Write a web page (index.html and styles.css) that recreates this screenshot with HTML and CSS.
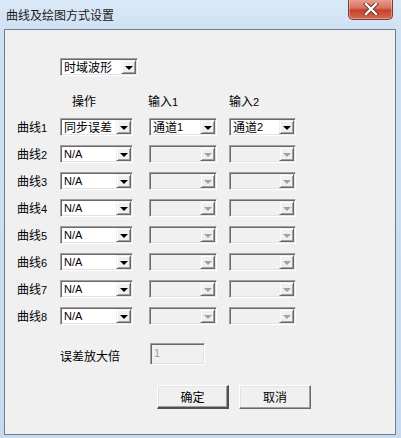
FILE: index.html
```html
<!DOCTYPE html>
<html>
<head>
<meta charset="utf-8">
<link rel="stylesheet" href="styles.css">
</head>
<body>
<div class="window">
  <div class="titlebar">
    <span class="title">曲线及绘图方式设置</span>
    <span class="close"><svg width="18" height="12" viewBox="0 0 18 12"><path d="M4 1 L14 11 M14 1 L4 11" stroke="#5a2a22" stroke-width="4" stroke-linecap="square"/><path d="M4 1 L14 11 M14 1 L4 11" stroke="#fff" stroke-width="2.4" stroke-linecap="square"/></svg></span>
  </div>
  <div class="client">
    <div class="combo wave"><span class="val">时域波形</span><span class="btn"><i class="arrow"></i></span></div>

    <div class="grid">
      <span></span><span class="hdr h1">操作</span><span class="hdr h2">输入<b class="num">1</b></span><span class="hdr h3">输入<b class="num">2</b></span>

      <span class="lbl">曲线<b class="num">1</b></span>
      <div class="combo"><span class="val">同步误差</span><span class="btn"><i class="arrow"></i></span></div>
      <div class="combo"><span class="val">通道<b class="num">1</b></span><span class="btn"><i class="arrow"></i></span></div>
      <div class="combo"><span class="val">通道<b class="num">2</b></span><span class="btn"><i class="arrow"></i></span></div>

      <span class="lbl">曲线<b class="num">2</b></span>
      <div class="combo"><span class="val na">N/A</span><span class="btn"><i class="arrow"></i></span></div>
      <div class="combo off"><span class="val"></span><span class="btn"><i class="arrow"></i></span></div>
      <div class="combo off"><span class="val"></span><span class="btn"><i class="arrow"></i></span></div>

      <span class="lbl">曲线<b class="num">3</b></span>
      <div class="combo"><span class="val na">N/A</span><span class="btn"><i class="arrow"></i></span></div>
      <div class="combo off"><span class="val"></span><span class="btn"><i class="arrow"></i></span></div>
      <div class="combo off"><span class="val"></span><span class="btn"><i class="arrow"></i></span></div>

      <span class="lbl">曲线<b class="num">4</b></span>
      <div class="combo"><span class="val na">N/A</span><span class="btn"><i class="arrow"></i></span></div>
      <div class="combo off"><span class="val"></span><span class="btn"><i class="arrow"></i></span></div>
      <div class="combo off"><span class="val"></span><span class="btn"><i class="arrow"></i></span></div>

      <span class="lbl">曲线<b class="num">5</b></span>
      <div class="combo"><span class="val na">N/A</span><span class="btn"><i class="arrow"></i></span></div>
      <div class="combo off"><span class="val"></span><span class="btn"><i class="arrow"></i></span></div>
      <div class="combo off"><span class="val"></span><span class="btn"><i class="arrow"></i></span></div>

      <span class="lbl">曲线<b class="num">6</b></span>
      <div class="combo"><span class="val na">N/A</span><span class="btn"><i class="arrow"></i></span></div>
      <div class="combo off"><span class="val"></span><span class="btn"><i class="arrow"></i></span></div>
      <div class="combo off"><span class="val"></span><span class="btn"><i class="arrow"></i></span></div>

      <span class="lbl">曲线<b class="num">7</b></span>
      <div class="combo"><span class="val na">N/A</span><span class="btn"><i class="arrow"></i></span></div>
      <div class="combo off"><span class="val"></span><span class="btn"><i class="arrow"></i></span></div>
      <div class="combo off"><span class="val"></span><span class="btn"><i class="arrow"></i></span></div>

      <span class="lbl">曲线<b class="num">8</b></span>
      <div class="combo"><span class="val na">N/A</span><span class="btn"><i class="arrow"></i></span></div>
      <div class="combo off"><span class="val"></span><span class="btn"><i class="arrow"></i></span></div>
      <div class="combo off"><span class="val"></span><span class="btn"><i class="arrow"></i></span></div>
    </div>

    <div class="gainrow">
      <span class="gainlbl">误差放大倍</span>
      <div class="field">1</div>
    </div>

    <div class="buttons">
      <div class="button default">确定</div>
      <div class="button">取消</div>
    </div>
  </div>
</div>
</body>
</html>
```
FILE: styles.css
```css
* { box-sizing: border-box; }
html, body { margin: 0; padding: 0; }
body {
  width: 401px;
  height: 438px;
  overflow: hidden;
  font-family: "Noto Sans CJK SC", "Liberation Sans", sans-serif;
  font-size: 12px;
  color: #000;
}
.window {
  width: 401px;
  height: 438px;
  background: linear-gradient(to bottom, #dbe9f7 0px, #cfe1f4 30px, #c6dbf1 100%);
  padding: 0 5px 3px 4px;
  display: flex;
  flex-direction: column;
}
.titlebar {
  height: 29px;
  display: flex;
  align-items: flex-start;
  justify-content: space-between;
}
.title {
  margin-top: 8px;
  margin-left: 2px;
  font-size: 12px;
  line-height: 14px;
  color: #1a1a1a;
}
.close {
  width: 45px;
  height: 21px;
  margin-right: 3px;
  margin-top: -1px;
  border: 1px solid #7d3a30;
  border-top: none;
  border-radius: 0 0 5px 5px;
  background: linear-gradient(to bottom, #e9a394 0%, #d9705d 45%, #c4412b 55%, #d46a50 100%);
  box-shadow: inset 0 0 0 1px rgba(255,255,255,0.35);
  display: flex;
  align-items: center;
  justify-content: center;
}
.client {
  flex: 1;
  background: #f0f0f0;
  border: 1px solid #6e7b88;
  padding-top: 28px;
}
.num {
  font-family: "Liberation Sans", "DejaVu Sans", sans-serif;
  font-weight: normal;
  font-size: 11px;
}
.combo {
  height: 18px;
  display: flex;
  align-items: stretch;
  background: #fff;
  border-top: 1px solid #a0a0a0;
  border-left: 1px solid #a0a0a0;
  border-bottom: 1px solid #fff;
  border-right: 1px solid #fff;
  box-shadow: inset 1px 1px 0 #696969, inset -1px -1px 0 #e3e3e3;
  padding: 1px 1px 1px 2px;
}
.combo .val {
  flex: 1;
  display: flex;
  align-items: center;
  padding-left: 1px;
  white-space: nowrap;
  line-height: 14px;
}
.combo .val.na {
  font-family: "Liberation Sans", "DejaVu Sans", sans-serif;
  font-size: 11px;
}
.combo .btn {
  width: 15px;
  flex: none;
  background: #f0f0f0;
  border-top: 1px solid #f0f0f0;
  border-left: 1px solid #f0f0f0;
  border-right: 1px solid #696969;
  border-bottom: 1px solid #696969;
  box-shadow: inset 1px 1px 0 #fff, inset -1px -1px 0 #a0a0a0;
  display: flex;
  align-items: center;
  justify-content: center;
}
.arrow {
  width: 0;
  height: 0;
  border-left: 4px solid transparent;
  border-right: 4px solid transparent;
  border-top: 4px solid #000;
  margin-top: 1px;
}
.combo.off { background: #f0f0f0; }
.combo.off .arrow { border-top-color: #a0a0a0; }
.wave {
  width: 78px;
  margin-left: 55px;
}
.grid {
  margin-top: 17px;
  display: grid;
  grid-template-columns: 43px 73px 84px 79px;
  grid-template-rows: 16px repeat(8, 18px);
  row-gap: 9px;
  padding-left: 12px;
}
.grid > .combo:nth-child(4n+3) { margin-left: 16px; width: 68px; }
.grid > .combo:nth-child(4n+4) { margin-left: 12px; width: 67px; }
.hdr { line-height: 16px; white-space: nowrap; }
.h1 { padding-left: 12px; }
.h2 { padding-left: 15px; }
.h3 { padding-left: 12px; }
.lbl {
  line-height: 18px;
  white-space: nowrap;
}
.gainrow {
  margin-top: 18px;
  display: flex;
  align-items: center;
  padding-left: 55px;
}
.gainlbl { width: 90px; line-height: 16px; margin-top: 4px; white-space: nowrap; }
.field {
  width: 55px;
  height: 22px;
  background: #f0f0f0;
  border-top: 1px solid #a0a0a0;
  border-left: 1px solid #a0a0a0;
  border-bottom: 1px solid #fff;
  border-right: 1px solid #fff;
  box-shadow: inset 1px 1px 0 #696969, inset -1px -1px 0 #e3e3e3;
  color: #a0a0a0;
  font-family: "Liberation Sans", sans-serif;
  font-size: 11px;
  padding: 2px 3px;
  line-height: 14px;
}
.buttons {
  margin-top: 20px;
  display: flex;
  gap: 10px;
  padding-left: 152px;
}
.button {
  width: 72px;
  height: 24px;
  background: #f0f0f0;
  border-top: 1px solid #fff;
  border-left: 1px solid #fff;
  border-right: 1px solid #696969;
  border-bottom: 1px solid #696969;
  box-shadow: inset -1px -1px 0 #a0a0a0, inset 1px 1px 0 #e3e3e3;
  text-align: center;
  line-height: 21px;
}
.button.default {
  border-right-width: 2px;
  border-bottom-width: 2px;
  border-color: #fff #505050 #505050 #fff;
}
```
